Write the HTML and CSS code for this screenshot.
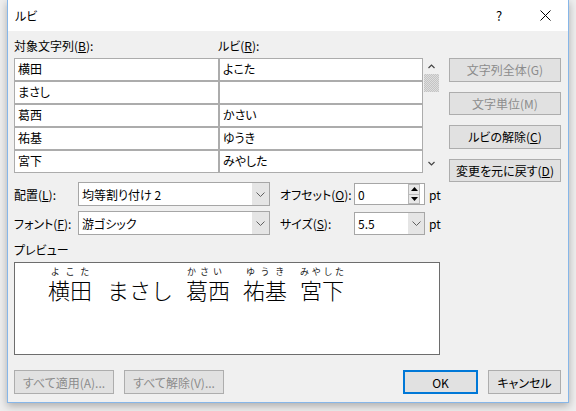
FILE: index.html
```html
<!DOCTYPE html>
<html lang="ja">
<head>
<meta charset="utf-8">
<title>ルビ</title>
<link rel="stylesheet" href="styles.css">
</head>
<body>
<div class="win">
  <div class="titlebar">
    <span class="title">ルビ</span>
    <span class="tb-btn tb-help">?</span>
    <span class="tb-btn tb-close"><svg width="11" height="11" viewBox="0 0 11 11"><path d="M0.5 0.5 L10.5 10.5 M10.5 0.5 L0.5 10.5" stroke="#000" stroke-width="1" fill="none"/></svg></span>
  </div>
  <div class="content">
    <div class="top">
      <div class="list">
        <div class="labels"><span class="lab-a">対象文字列(<u>B</u>):</span><span>ルビ(<u>R</u>):</span></div>
        <div class="tablerow">
          <div class="grid">
            <div class="cell">横田</div><div class="cell">よこた</div>
            <div class="cell">まさし</div><div class="cell"></div>
            <div class="cell">葛西</div><div class="cell">かさい</div>
            <div class="cell">祐基</div><div class="cell">ゆうき</div>
            <div class="cell">宮下</div><div class="cell">みやした</div>
          </div>
          <div class="vscroll">
            <div class="sb-arrow"><svg width="7" height="5" viewBox="0 0 7 5"><path d="M0.5 4 L3.5 1 L6.5 4" stroke="#444" stroke-width="1.2" fill="none"/></svg></div>
            <div class="sb-thumb"></div>
            <div class="sb-space"></div>
            <div class="sb-arrow sb-down"><svg width="7" height="5" viewBox="0 0 7 5"><path d="M0.5 1 L3.5 4 L6.5 1" stroke="#444" stroke-width="1.2" fill="none"/></svg></div>
          </div>
        </div>
      </div>
      <div class="sidebtns">
        <div class="btn disabled">文字列全体(G)</div>
        <div class="btn disabled">文字単位(M)</div>
        <div class="btn">ルビの解除(<u>C</u>)</div>
        <div class="btn">変更を元に戻す(<u>D</u>)</div>
      </div>
    </div>
    <div class="form">
      <div class="frow">
        <span class="flabel">配置(<u>L</u>):</span>
        <div class="combo wide"><span class="combo-text">均等割り付け 2</span><span class="combo-drop"><svg width="9" height="5" viewBox="0 0 9 5"><path d="M0.5 0.5 L4.5 4.5 L8.5 0.5" stroke="#606060" stroke-width="1" fill="none"/></svg></span></div>
        <span class="flabel2">オフセット(<u>O</u>):</span>
        <div class="spin"><span class="combo-text">0</span><span class="spin-btns"><span class="spin-up"><svg width="7" height="4" viewBox="0 0 7 4"><path d="M0 4 L3.5 0 L7 4 Z" fill="#000"/></svg></span><span class="spin-dn"><svg width="7" height="4" viewBox="0 0 7 4"><path d="M0 0 L3.5 4 L7 0 Z" fill="#000"/></svg></span></span></div>
        <span class="unit">pt</span>
      </div>
      <div class="frow">
        <span class="flabel">フォント(<u>F</u>):</span>
        <div class="combo wide"><span class="combo-text">游ゴシック</span><span class="combo-drop"><svg width="9" height="5" viewBox="0 0 9 5"><path d="M0.5 0.5 L4.5 4.5 L8.5 0.5" stroke="#606060" stroke-width="1" fill="none"/></svg></span></div>
        <span class="flabel2">サイズ(<u>S</u>):</span>
        <div class="combo small"><span class="combo-text">5.5</span><span class="combo-drop"><svg width="9" height="5" viewBox="0 0 9 5"><path d="M0.5 0.5 L4.5 4.5 L8.5 0.5" stroke="#606060" stroke-width="1" fill="none"/></svg></span></div>
        <span class="unit">pt</span>
      </div>
    </div>
    <div class="prev-label">プレビュー</div>
    <div class="preview">
      <div class="prev-line">
        <span class="ru"><span class="rt"><span>よ</span><span>こ</span><span>た</span></span><span class="rb">横田</span></span>
        <span class="ru plain"><span class="rt"></span><span class="rb">まさし</span></span>
        <span class="ru"><span class="rt tight"><span>か</span><span>さ</span><span>い</span></span><span class="rb">葛西</span></span>
        <span class="ru"><span class="rt"><span>ゆ</span><span>う</span><span>き</span></span><span class="rb">祐基</span></span>
        <span class="ru"><span class="rt full"><span>み</span><span>や</span><span>し</span><span>た</span></span><span class="rb">宮下</span></span>
      </div>
    </div>
    <div class="footer">
      <div class="btn disabled fb-wide">すべて適用(A)...</div>
      <div class="btn disabled fb-wide">すべて解除(V)...</div>
      <div class="btn default fb-ok">OK</div>
      <div class="btn fb-cancel">キャンセル</div>
    </div>
  </div>
</div>
</body>
</html>
```
FILE: styles.css
```css
* { box-sizing: border-box; }
html, body { margin: 0; padding: 0; }
body {
  width: 576px;
  height: 411px;
  overflow: hidden;
  background: #eeeeee;
  font-family: "Noto Sans CJK JP", "Noto Sans", sans-serif;
  font-size: 12px;
  color: #000;
  font-feature-settings: "palt";
}
u { text-decoration: underline; text-underline-offset: 1px; }

.win {
  margin-left: 7px;
  width: 562px;
  height: 403px;
  background: #f0f0f0;
  border: 1px solid #86b6e8;
  border-top: none;
  box-shadow: 0 3px 8px rgba(0,0,0,0.28);
}

.titlebar {
  height: 31px;
  background: #fff;
  display: flex;
  align-items: center;
}
.title { padding-left: 7px; font-size: 12px; }
.tb-btn {
  width: 46px;
  height: 31px;
  display: flex;
  align-items: center;
  justify-content: center;
}
.tb-help { margin-left: auto; font-size: 13px; }

.content { padding-left: 6px; }

.top { display: flex; height: 151px; }
.list { width: 426px; padding-top: 7px; }
.labels { display: flex; height: 16px; line-height: 16px; white-space: nowrap; }
.lab-a { width: 204px; }
.tablerow { display: flex; margin-top: 4px; }
.grid {
  display: grid;
  grid-template-columns: 205px 204px;
  grid-auto-rows: 23px;
}
.cell {
  border: 1px solid #acacac;
  background: #fff;
  padding-left: 3px;
  line-height: 20px;
  font-size: 12px;
}
.vscroll {
  width: 15px;
  margin-left: 1px;
  height: 115px;
  display: flex;
  flex-direction: column;
}
.sb-arrow { height: 16px; display: flex; align-items: center; justify-content: center; }
.sb-down { height: 14px; margin-bottom: 3px; }
.sb-thumb {
  height: 18px;
  background: repeating-conic-gradient(#c4c4c4 0 25%, #dedede 0 50%) 0 0 / 2px 2px;
}
.sb-space { flex: 1; }

.sidebtns {
  margin-left: 9px;
  width: 112px;
  padding-top: 27px;
  display: flex;
  flex-direction: column;
  gap: 10px;
}
.btn {
  height: 24px;
  background: #e1e1e1;
  border: 1px solid #adadad;
  display: flex;
  align-items: center;
  justify-content: center;
  font-size: 12px;
  white-space: nowrap;
}
.btn.disabled { color: #8c8c8c; }

.form { display: flex; flex-direction: column; gap: 5px; }
.frow { display: flex; align-items: center; height: 24px; white-space: nowrap; }
.flabel { width: 64px; flex-shrink: 0; }
.flabel2 { width: 74px; margin-left: 10px; flex-shrink: 0; }
.combo {
  height: 24px;
  background: #fff;
  border: 1px solid #a6a6a6;
  display: flex;
  align-items: center;
  flex-shrink: 0;
}
.combo.wide { width: 192px; }
.combo.small { width: 71px; height: 23px; }
.combo-text { flex: 1; padding-left: 3px; }
.combo-drop {
  width: 17px;
  align-self: stretch;
  background: #e5e5e5;
  display: flex;
  align-items: center;
  justify-content: center;
}
.combo.small .combo-drop { width: 16px; }
.spin {
  width: 71px;
  height: 22px;
  background: #fff;
  border: 1px solid #a6a6a6;
  display: flex;
  align-items: center;
  padding-right: 4px;
  flex-shrink: 0;
}
.spin-btns { display: flex; flex-direction: column; width: 12px; height: 20px; }
.spin-up, .spin-dn {
  flex: 1;
  display: flex;
  align-items: center;
  justify-content: center;
  background: #e8e8e8;
  border: 1px solid #b8b8b8;
}
.spin-dn { border-top: none; }
.unit { margin-left: 4px; }

.prev-label { margin-top: 7px; height: 16px; line-height: 16px; }
.preview {
  margin-top: 4px;
  width: 426px;
  height: 93px;
  background: #fff;
  border: 1px solid #6d6d6d;
  padding: 3px 0 0 33px;
  font-feature-settings: normal;
}
.prev-line { display: flex; gap: 13px; align-items: flex-end; }
.ru { display: inline-flex; flex-direction: column; }
.plain { margin-left: 2px; }
.rt {
  height: 11px;
  line-height: 11px;
  font-size: 9px;
  display: flex;
  justify-content: space-around;
  color: #222;
}
.rt.tight { justify-content: flex-start; gap: 4px; padding-left: 1px; }
.rt.full { justify-content: space-between; }
.rb {
  font-size: 22px;
  line-height: 24px;
  font-weight: 300;
}

.footer {
  margin-top: 15px;
  margin-right: 7px;
  display: flex;
  gap: 10px;
}
.fb-wide { width: 100px; }
.fb-ok { margin-left: auto; width: 75px; border: 2px solid #0078d7; }
.fb-cancel { width: 73px; }
```
